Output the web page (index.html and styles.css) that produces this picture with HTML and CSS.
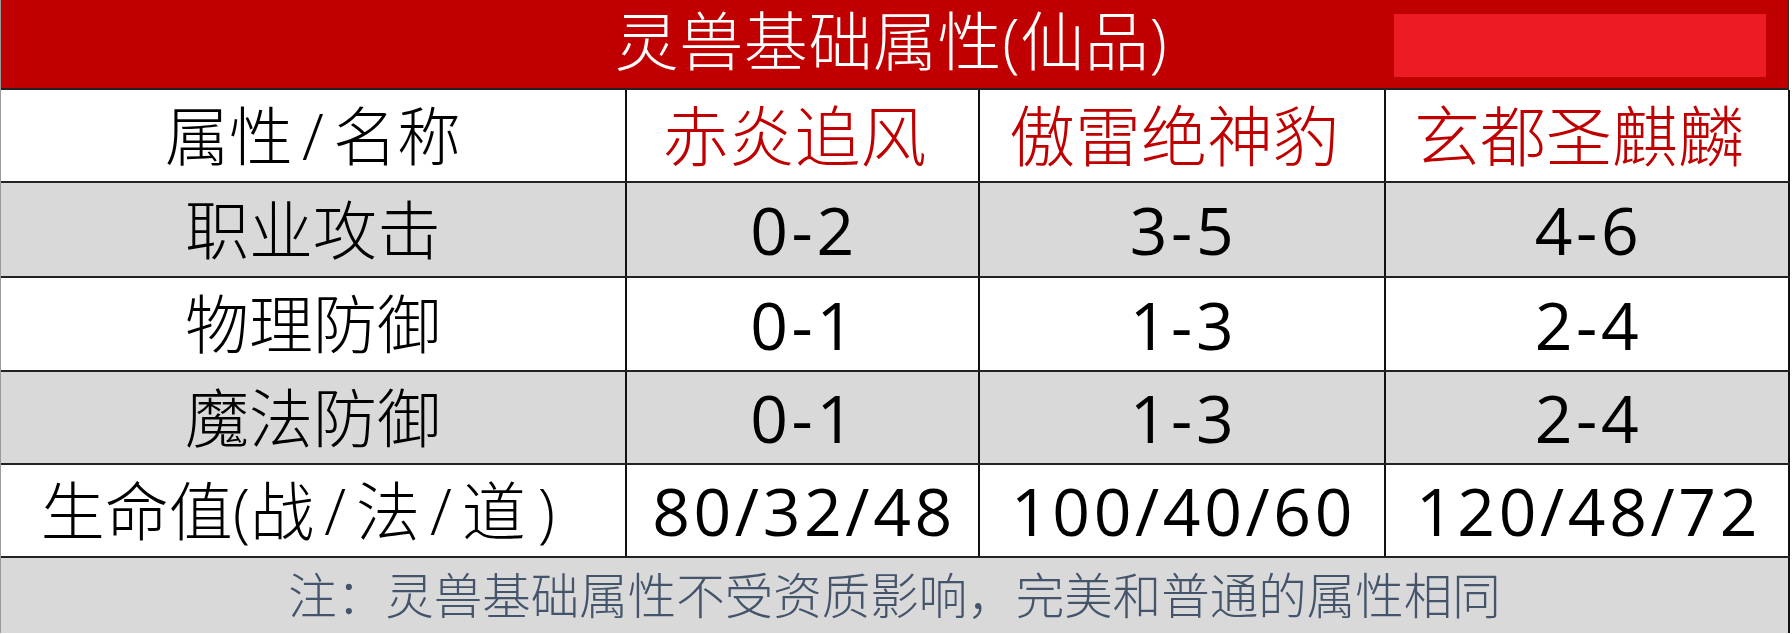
FILE: index.html
```html
<!DOCTYPE html>
<html lang="zh-CN">
<head>
<meta charset="utf-8">
<title>灵兽基础属性(仙品)</title>
<link rel="stylesheet" href="styles.css">
</head>
<body>
<div class="sheet">
  <div class="title">
    <span class="title-text">灵兽基础属性(仙品)</span>
    <span class="redact"></span>
  </div>
  <table class="grid">
    <colgroup>
      <col class="c1"><col class="c2"><col class="c3"><col class="c4">
    </colgroup>
    <tr class="head">
      <td>属性<span class="hs">/</span>名称</td>
      <td class="name">赤炎追风</td>
      <td class="name">傲雷绝神豹</td>
      <td class="name">玄都圣麒麟</td>
    </tr>
    <tr class="gray r1">
      <td>职业攻击</td><td class="num">0-2</td><td class="num">3-5</td><td class="num">4-6</td>
    </tr>
    <tr class="white r2">
      <td>物理防御</td><td class="num">0-1</td><td class="num">1-3</td><td class="num">2-4</td>
    </tr>
    <tr class="gray r3">
      <td>魔法防御</td><td class="num">0-1</td><td class="num">1-3</td><td class="num">2-4</td>
    </tr>
    <tr class="white r4">
      <td class="hp">生命值(战<span class="sl">/</span>法<span class="sl">/</span>道<span class="cp">)</span></td><td class="num">80/32/48</td><td class="num">100/40/60</td><td class="num">120/48/72</td>
    </tr>
    <tr class="note">
      <td colspan="4">注：灵兽基础属性不受资质影响，完美和普通的属性相同</td>
    </tr>
  </table>
</div>
</body>
</html>
```
FILE: styles.css
```css
html, body {
  margin: 0;
  padding: 0;
  background: #ffffff;
}
body {
  font-family: "Open Sans", "Noto Sans CJK SC", sans-serif;
  color: #000;
}
.sheet {
  width: 1789px;
  border-left: 1px solid #9a9a9a;
  box-sizing: border-box;
}
.title {
  position: relative;
  height: 88px;
  background: #c00000;
  border-bottom: 2px solid #222;
  border-right: 2px solid #333;
  display: flex;
  align-items: center;
  justify-content: center;
  color: #fff;
  font-size: 64px;
  line-height: 1;
  font-weight: 300;
}
.title-text {
  padding-bottom: 6px;
  padding-right: 6px;
  letter-spacing: 0.6px;
}
.redact {
  position: absolute;
  left: 1393px;
  top: 14px;
  width: 372px;
  height: 63px;
  background: #ed1c24;
}
.grid {
  width: 1788px;
  border-collapse: collapse;
  table-layout: fixed;
}
.c1 { width: 625px; }
.c2 { width: 353px; }
.c3 { width: 406px; }
.c4 { width: 404px; }
.grid td {
  border-right: 2px solid #111;
  border-bottom: 2px solid #222;
  text-align: center;
  vertical-align: middle;
  padding: 0;
  font-size: 64px;
  font-weight: 300;
  line-height: 1.25;
  white-space: nowrap;
}
.head td { height: 91px; background: #fff; }
.head td.name {
  color: #c00000;
  font-size: 66px;
  padding-right: 16px;
}
.gray td { background: #d9d9d9; }
.white td { background: #fff; }
.r1 td { height: 93px; }
.r2 td { height: 92px; }
.r3 td { height: 91px; }
.r4 td { height: 91px; }
.grid td.num {
  font-size: 66px;
  font-weight: 400;
  letter-spacing: 3.6px;
  padding-left: 3px;
}
.hs { margin: 0 9px; }
.grid td.hp { padding-right: 30px; }
.sl { margin: 0 10px; }
.cp { margin-left: 12px; }
.note td {
  height: 75px;
  background: #d9d9d9;
  border-bottom: none;
  color: #44546a;
  font-size: 48.5px;
}
```
